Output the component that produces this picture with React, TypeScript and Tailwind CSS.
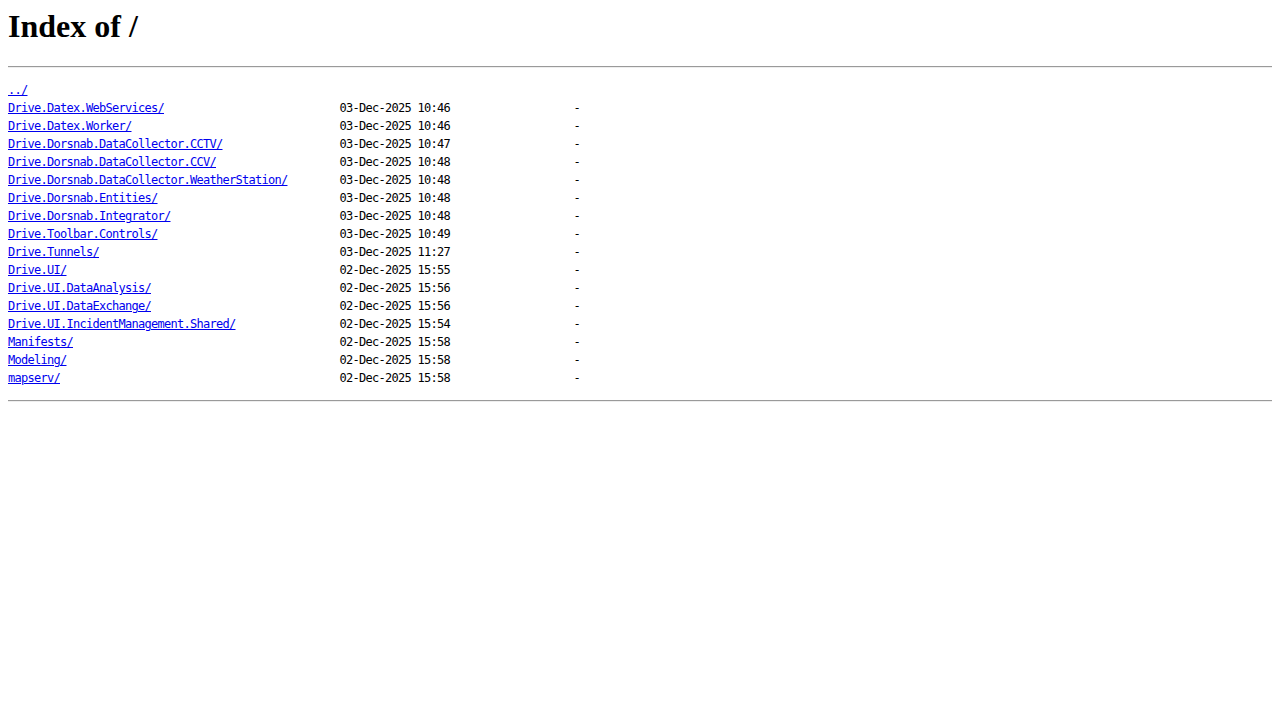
import React from "react";

const rows: [string, string][] = [
  ["Drive.Datex.WebServices/", "03-Dec-2025 10:46"],
  ["Drive.Datex.Worker/", "03-Dec-2025 10:46"],
  ["Drive.Dorsnab.DataCollector.CCTV/", "03-Dec-2025 10:47"],
  ["Drive.Dorsnab.DataCollector.CCV/", "03-Dec-2025 10:48"],
  ["Drive.Dorsnab.DataCollector.WeatherStation/", "03-Dec-2025 10:48"],
  ["Drive.Dorsnab.Entities/", "03-Dec-2025 10:48"],
  ["Drive.Dorsnab.Integrator/", "03-Dec-2025 10:48"],
  ["Drive.Toolbar.Controls/", "03-Dec-2025 10:49"],
  ["Drive.Tunnels/", "03-Dec-2025 11:27"],
  ["Drive.UI/", "02-Dec-2025 15:55"],
  ["Drive.UI.DataAnalysis/", "02-Dec-2025 15:56"],
  ["Drive.UI.DataExchange/", "02-Dec-2025 15:56"],
  ["Drive.UI.IncidentManagement.Shared/", "02-Dec-2025 15:54"],
  ["Manifests/", "02-Dec-2025 15:58"],
  ["Modeling/", "02-Dec-2025 15:58"],
  ["mapserv/", "02-Dec-2025 15:58"],
];

export default function App() {
  return (
    <div className="min-h-screen bg-white px-2 pt-2 text-black">
      <h1 className="mb-[21.44px] text-[32px] font-bold leading-[37px] font-['Liberation_Serif',serif]">
        Index of /
      </h1>
      <div className="h-[2px] border-t border-t-[#9a9a9a] border-b border-b-[#eeeeee]" />
      <pre className="mt-[13px] mb-[13px] whitespace-pre font-['DejaVu_Sans_Mono',monospace] text-[12px] leading-[18px] tracking-[-0.725px]">
        <a href="#" className="text-[#0000ee] underline">../</a>
        {"\n"}
        {rows.map(([name, date]) => (
          <React.Fragment key={name}>
            <a href="#" className="text-[#0000ee] underline">{name}</a>
            {" ".repeat(51 - name.length) + date + " ".repeat(19) + "-\n"}
          </React.Fragment>
        ))}
      </pre>
      <div className="h-[2px] border-t border-t-[#9a9a9a] border-b border-b-[#eeeeee]" />
    </div>
  );
}
